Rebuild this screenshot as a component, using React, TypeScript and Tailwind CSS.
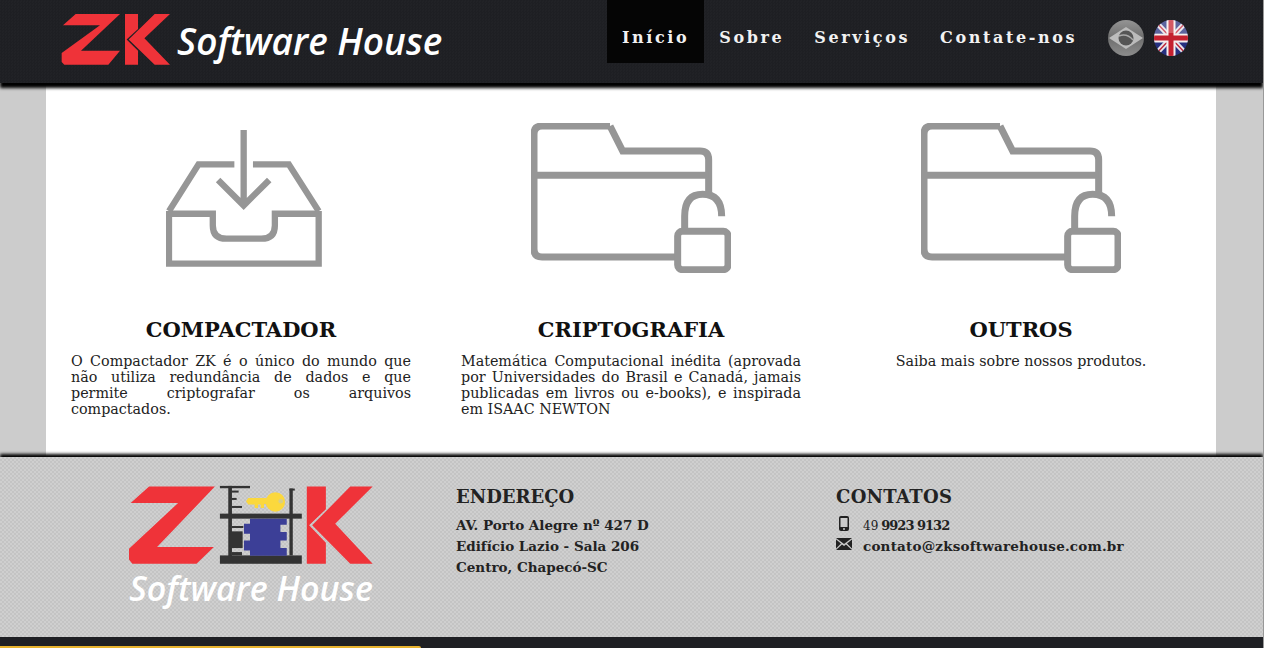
import React from 'react';

const serif = 'font-["DejaVu_Serif","Liberation_Serif",serif]';
const menu = ['Início', 'Sobre', 'Serviços', 'Contate-nos'];

// K is shared by both logos, coordinates come from the footer logo
function KPath() {
    return (
        <>
            <path d="M620 54H677V122L627 170L677 222V285H620Z" />
            <path d="M750 54H817L705 165L817 285H750L636 170Z" />
        </>
    );
}

function HeaderLogo() {
    return (
        <svg width="125" height="62" viewBox="0 0 375 186" fill="#ef3339">
            <path d="M24 52L62 18H195L78 128H195L160 170H28L20 162V135L135 52Z" />
            <g transform="translate(210 18) scale(0.685 0.658) translate(-620 -54)">
                <KPath />
            </g>
        </svg>
    );
}

function FooterLogo() {
    return (
        <svg width="244" height="80" viewBox="88 50 730 238">
            <path fill="#ef3339" d="M93 103L148 54H345L172 235H342L290 285H98L88 272V240L235 103Z" />
            <g fill="#ef3339">
                <KPath />
            </g>
            <g fill="#333">
                <rect x="360" y="52" width="90" height="7" />
                <rect x="385" y="52" width="11" height="210" />
                <rect x="396" y="66" width="20" height="6" />
                <rect x="396" y="88" width="14" height="6" />
                <rect x="396" y="112" width="30" height="6" />
                <rect x="568" y="60" width="10" height="200" />
                <rect x="568" y="60" width="16" height="6" />
                <rect x="360" y="135" width="245" height="15" />
                <rect x="360" y="260" width="245" height="25" />
                <rect x="396" y="172" width="34" height="6" />
                <rect x="388" y="188" width="40" height="50" />
                <rect x="396" y="250" width="30" height="10" />
            </g>
            <path
                fill="#3c3f97"
                d="M450 150H560V168H541V190H560V215H541V238H560V261H450V245H432V215H450V195H432V165H450Z"
            />
            <g fill="#fbd83d">
                <circle cx="526" cy="100" r="29" />
                <path d="M445 88H500V106H492V118H482V108H474V118H464V108H445L438 98Z" />
            </g>
            <circle cx="542" cy="98" r="7" fill="#d8cf88" />
        </svg>
    );
}

function InboxIcon() {
    return (
        <svg className="ml-[6px]" width="156" height="138" viewBox="78 55 470 415" fill="none" stroke="#969696" strokeWidth="19">
            <path d="M87 302V460H538V302" />
            <path d="M87 310H219V345Q219 385 260 385H365Q406 385 406 345V310H538" />
            <path d="M87 302L176 161H284M340 161H448L538 302" />
            <path d="M312 58V285M235 208L312 285L389 208" />
        </svg>
    );
}

function FolderIcon() {
    return (
        <svg width="200" height="150" viewBox="33 40 600 450" fill="none" stroke="#969696" strokeWidth="21">
            <path d="M270 49H66Q42 49 42 73V418Q42 442 66 442H470" />
            <path d="M270 49L308 124H540Q566 124 566 150V250" />
            <path d="M42 197H566" />
            <path d="M494 365V320Q494 254 548 254Q605 254 605 320" />
            <rect x="473" y="365" width="151" height="115" rx="14" />
        </svg>
    );
}

function BrazilFlag() {
    return (
        <svg width="36" height="36" viewBox="0 0 36 36">
            <defs>
                <linearGradient id="br" x1="0" y1="0" x2="0" y2="1">
                    <stop offset="0" stopColor="#949494" />
                    <stop offset="0.5" stopColor="#6e6e6e" />
                    <stop offset="1" stopColor="#8c8c8c" />
                </linearGradient>
            </defs>
            <circle cx="18" cy="18" r="18" fill="url(#br)" />
            <path d="M1 18L18 7L35 18L18 29Z" fill="#bcbcbc" />
            <circle cx="18" cy="18" r="7.5" fill="#555" />
            <path d="M11 16Q19 13 25 20" fill="none" stroke="#aaa" strokeWidth="1.5" />
        </svg>
    );
}

function UkFlag() {
    return (
        <svg width="34" height="36" viewBox="0 0 34 36">
            <defs>
                <clipPath id="uk">
                    <ellipse cx="17" cy="18" rx="17" ry="18" />
                </clipPath>
            </defs>
            <g clipPath="url(#uk)">
                <rect width="34" height="36" fill="#26307f" />
                <path d="M0 0L34 36M34 0L0 36" stroke="#e8e4ea" strokeWidth="5" />
                <path d="M0 0L34 36M34 0L0 36" stroke="#c0263a" strokeWidth="1.5" />
                <path d="M17 0V36M0 18H34" stroke="#f4eeee" strokeWidth="9" />
                <path d="M17 0V36M0 18H34" stroke="#c4202f" strokeWidth="5" />
                <rect width="34" height="13" fill="#fff" opacity="0.25" />
            </g>
        </svg>
    );
}

// Each line is its own block so the wrapping stays the same as the original page
function Feature({ icon, title, lines, center }: { icon: React.ReactNode; title: string; lines: string[]; center?: boolean }) {
    return (
        <div className="w-[390px] px-[25px]">
            <div className="flex h-[150px] mt-[40px] items-center justify-center">{icon}</div>
            <h2 className={`${serif} mt-[42px] text-center text-[21px] leading-[30px] font-bold text-[#111]`}>{title}</h2>
            <div className={`${serif} mt-[8px] text-[14.3px] leading-[16px] whitespace-nowrap text-[#222]`}>
                {lines.map((line, i) => (
                    <div
                        key={line}
                        className={center ? 'text-center' : i < lines.length - 1 ? 'text-justify [text-align-last:justify]' : 'text-left'}
                    >
                        {line}
                    </div>
                ))}
            </div>
        </div>
    );
}

export default function App() {
    return (
        <div className={`${serif} flex h-[648px] w-[1264px] flex-col overflow-hidden border-r border-[#999] bg-[#ccc]`}>
            {/* Header */}
            <header className="relative z-10 flex h-[83px] shrink-0 bg-[#1f2024] bg-[repeating-conic-gradient(#1e1f23_0_25%,#212226_0_50%)] bg-[length:3px_3px] shadow-[0_5px_3px_#000]">
                <div className="ml-[55px] mt-[8px] flex h-[62px] w-[552px]">
                    <HeaderLogo />
                    <span className='ml-[-3px] mt-[8px] font-["Open_Sans",sans-serif] text-[37px] leading-[50px] font-semibold whitespace-nowrap text-white italic'>
                        Software House
                    </span>
                </div>
                <nav className="flex h-[63px]">
                    {menu.map((item, i) => (
                        <a
                            key={item}
                            className={`flex h-full items-center px-[15px] pt-[12px] text-[16px] font-bold tracking-[2.6px] text-[#f2f2f2] ${i === 0 ? 'bg-[#050505]' : ''}`}
                        >
                            {item}
                        </a>
                    ))}
                </nav>
                <div className="ml-[16px] mt-[20px] flex h-[36px] gap-[10px]">
                    <BrazilFlag />
                    <UkFlag />
                </div>
            </header>

            {/* Features */}
            <main className="mx-[46px] flex h-[374px] w-[1170px] shrink-0 bg-white">
                <Feature
                    icon={<InboxIcon />}
                    title="COMPACTADOR"
                    lines={[
                        'O Compactador ZK é o único do mundo que',
                        'não utiliza redundância de dados e que',
                        'permite criptografar os arquivos',
                        'compactados.',
                    ]}
                />
                <Feature
                    icon={<FolderIcon />}
                    title="CRIPTOGRAFIA"
                    lines={[
                        'Matemática Computacional inédita (aprovada',
                        'por Universidades do Brasil e Canadá, jamais',
                        'publicadas em livros ou e-books), e inspirada',
                        'em ISAAC NEWTON',
                    ]}
                />
                <Feature icon={<FolderIcon />} title="OUTROS" lines={['Saiba mais sobre nossos produtos.']} center />
            </main>

            {/* Footer */}
            <footer className="relative flex h-[180px] shrink-0 bg-[repeating-conic-gradient(#c4c4c4_0_25%,#cfcfcf_0_50%)] bg-[length:4px_4px] pl-[46px] shadow-[0_-3px_3px_#000]">
                <div className="flex w-[410px] flex-col items-center pt-[28px]">
                    <FooterLogo />
                    <span className='mt-[4px] font-["Open_Sans",sans-serif] text-[34px] leading-[38px] font-semibold whitespace-nowrap text-white italic'>
                        Software House
                    </span>
                </div>
                <div className="w-[380px] pt-[26px] text-[#222]">
                    <h3 className="text-[18px] leading-[28px] font-bold">ENDEREÇO</h3>
                    <p className="mt-[4px] text-[13.5px] leading-[21px] font-bold">
                        AV. Porto Alegre nº 427 D
                        <br />
                        Edifício Lazio - Sala 206
                        <br />
                        Centro, Chapecó-SC
                    </p>
                </div>
                <div className="pt-[26px] text-[#222]">
                    <h3 className="text-[18px] leading-[28px] font-bold tracking-[0.3px]">CONTATOS</h3>
                    <div className="mt-[4px] flex h-[21px] items-center text-[13px] font-bold tracking-[-1px]">
                        <span className="mt-[-4px] flex w-[27px] pl-[3px]">
                            <svg width="10" height="15" viewBox="0 0 10 15">
                                <rect width="10" height="15" rx="2" fill="#222" />
                                <rect x="1.5" y="2" width="7" height="9" fill="#ccc" />
                                <circle cx="5" cy="13" r="1" fill="#ccc" />
                            </svg>
                        </span>
                        <span className="mr-[3px] text-[12px] font-normal tracking-normal">49</span>
                        9923 9132
                    </div>
                    <div className="flex h-[21px] items-center text-[13.5px] font-bold tracking-[0.2px]">
                        <span className="mt-[-5px] flex w-[27px]">
                            <svg width="16" height="12" viewBox="0 0 16 12" fill="#222">
                                <path d="M0 0H16L8 6Z" />
                                <path d="M0 1.5V10.5L5 5.5ZM16 1.5V10.5L11 5.5Z" />
                                <path d="M0 12L6 6.5L8 8L10 6.5L16 12Z" />
                            </svg>
                        </span>
                        contato@zksoftwarehouse.com.br
                    </div>
                </div>
            </footer>

            {/* Bottom bar */}
            <div className="flex-1 bg-[#1f2024] pt-[9px]">
                <div className="h-[2px] w-[421px] rounded-tr-[2px] bg-[#e8b32e]" />
            </div>
        </div>
    );
}
